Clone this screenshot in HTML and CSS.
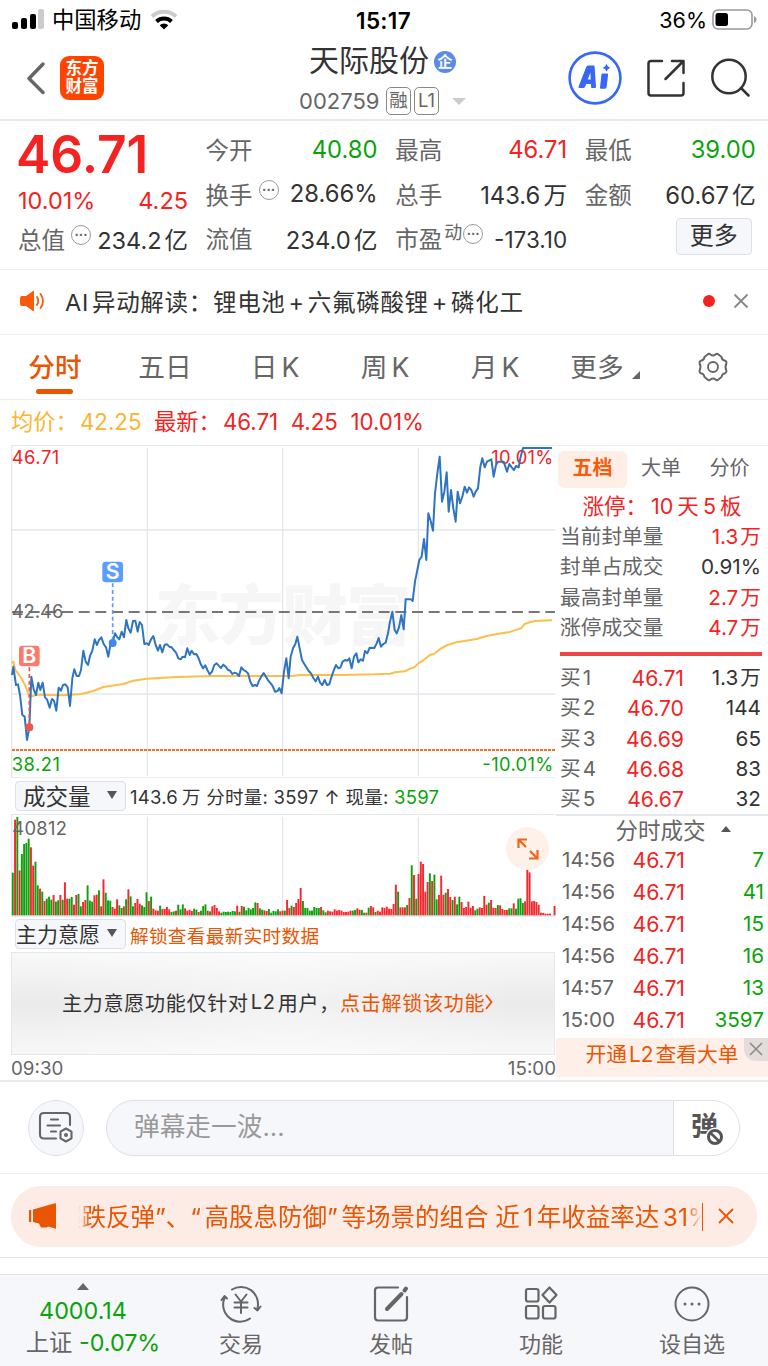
FILE: index.html
```
<!DOCTYPE html>
<html lang="zh-CN">
<head>
    <meta charset="UTF-8">
    <meta name="viewport" content="width=device-width, initial-scale=1.0">
    <title>天际股份 002759</title>
    <link rel="stylesheet" href="styles.css">
</head>
<body>
    <!-- Status bar -->
    <div class="status-bar">
        <div class="carrier">
            <svg width="33" height="22" viewBox="0 0 33 22">
                <rect x="0" y="13" width="6" height="7" rx="2"/>
                <rect x="9" y="9" width="6" height="11" rx="2"/>
                <rect x="18" y="5" width="6" height="15" rx="2"/>
                <rect x="26" y="0" width="6" height="20" rx="2" fill="#ccc"/>
            </svg>
            <span>中国移动</span>
            <svg class="wifi" width="28" height="22" viewBox="0 0 28 22" fill="none" stroke-width="4">
                <path d="M2 7.5A17.5 17.5 0 0 1 26 7.5" stroke="#ccc"/>
                <path d="M6.5 12.5A11 11 0 0 1 21.500 12.5" stroke="#000"/>
                <path d="M14 20.500L9.700 16.200A6.200 6.200 0 0 1 18.300 16.200Z" fill="#000"/>
            </svg>
        </div>
        <div class="clock">15:17</div>
        <div class="battery">
            <span>36%</span>
            <svg width="46" height="22" viewBox="0 0 46 22">
                <rect x="1" y="1" width="39" height="19" rx="5" fill="none" stroke="#999" stroke-width="1.600"/>
                <rect x="3.500" y="4" width="12.500" height="13" rx="2.500"/>
                <path d="M42 7q2.500 1 2.500 3.500T42 14z" fill="#999"/>
            </svg>
        </div>
    </div>

    <!-- Header -->
    <div class="header">
        <div class="header-left">
            <svg width="20" height="34" viewBox="0 0 20 34" fill="none" stroke="#666" stroke-width="3.500" stroke-linecap="round" stroke-linejoin="round"><path d="M17 3L3 17.500L17 31.500"/></svg>
            <div class="logo">东方<br>财富</div>
        </div>
        <div class="header-title">
            <div class="stock-name">天际股份<span class="badge-corp">企</span></div>
            <div class="stock-code"><span>002759</span><i>融</i><i>L1</i><b></b></div>
        </div>
        <div class="header-right">
            <svg width="54" height="54" viewBox="0 0 54 54">
                <circle cx="27" cy="27" r="25.400" fill="#fff" stroke="#3767f6" stroke-width="2.600"/>
                <path fill="#3767f6" fill-rule="evenodd" d="M20 14.500h5.500q1 0 1.100 1.200l1.400 20q0 1.300-1.300 1.300h-3.400l-.4-4h-4.700l-1.400 3.300q-.4.700-1.300.700h-4q-1.500 0-.9-1.500l7.600-19.500q.5-1.500 1.800-1.500zM19.800 28.500h2.900l-.3-7z"/>
                <path fill="#3767f6" d="M34.500 22.500h4.500q1.300 0 1.100 1.300l-1.500 12.500q-.1 1.400-1.500 1.400h-4q-1.300 0-1.100-1.300l1.400-12.500q.1-1.400 1.100-1.400zM38.500 12.500q.8 3.500 4 4.300q-3.200.8-4 4q-.8-3.200-4-4q3.200-.8 4-4.300z"/>
            </svg>
            <svg width="38" height="38" viewBox="0 0 38 38" fill="none" stroke="#333" stroke-width="2.500" stroke-linejoin="round" stroke-linecap="round">
                <path d="M15 2H4Q1.500 2 1.500 4.500V34Q1.500 36.500 4 36.500H34Q36.500 36.500 36.500 34V24M36.500 14V2H25M36 2.500L18.500 20"/>
            </svg>
            <svg width="40" height="40" viewBox="0 0 40 40" fill="none" stroke="#333" stroke-width="2.500" stroke-linecap="round"><circle cx="19" cy="18.500" r="16.700"/><path d="M31 30l7.500 7.500"/></svg>
        </div>
    </div>

    <!-- Quote -->
    <div class="quote">
        <div class="quote-main">
            <div class="price">46.71</div>
            <div class="row red"><span>10.01%</span><span>4.25</span></div>
            <div class="row"><label>总值<em class="more-dot">···</em></label><span>234.2<u>亿</u></span></div>
        </div>
        <div class="quote-col">
            <div class="row"><label>今开</label><span class="green">40.80</span></div>
            <div class="row"><label>换手<em class="more-dot">···</em></label><span>28.66%</span></div>
            <div class="row"><label>流值</label><span>234.0<u>亿</u></span></div>
        </div>
        <div class="quote-col">
            <div class="row"><label>最高</label><span class="red">46.71</span></div>
            <div class="row"><label>总手</label><span>143.6<u>万</u></span></div>
            <div class="row"><label>市盈<sup>动</sup><em class="more-dot tight">···</em></label><span class="pe">-173.10</span></div>
        </div>
        <div class="quote-col">
            <div class="row"><label>最低</label><span class="green">39.00</span></div>
            <div class="row"><label>金额</label><span>60.67<u>亿</u></span></div>
            <div class="row end"><button class="btn-more">更多</button></div>
        </div>
    </div>

    <!-- AI notice -->
    <div class="ai-bar">
        <svg width="26" height="22" viewBox="0 0 26 22" fill="#fa5a0a">
            <path d="M2 6h4l7-5q1-.5 1 .500v19q0 1-1 .500L6 16H2q-2 0-2-2V8q0-2 2-2z"/>
            <path d="M17 7q2.500 4 0 8M20.500 4q5 7 0 14" fill="none" stroke="#fa5a0a" stroke-width="1.800" stroke-linecap="round"/>
        </svg>
        <p>AI<u>异动解读：锂电池</u><u>+</u><u>六氟磷酸锂</u><u>+</u><u>磷化工</u></p>
        <span class="dot"></span>
        <svg width="16" height="16" viewBox="0 0 16 16" stroke="#888" stroke-width="1.800"><path d="M1.500 1.500l13 13M14.500 1.500l-13 13"/></svg>
    </div>

    <!-- Period tabs -->
    <div class="tabs">
        <span class="active">分时</span>
        <span>五日</span>
        <span>日<s>K</s></span>
        <span>周<s>K</s></span>
        <span>月<s>K</s></span>
        <span class="tab-more">更多</span>
        <svg class="gear" width="32" height="32" viewBox="0 0 32 32" fill="none" stroke="#666" stroke-width="1.900" stroke-linejoin="round">
            <path d="M10.500 3.500Q12 2 13.500 3.500Q16 5.500 18.500 3.500Q20 2 21.500 3.500L24.500 6Q25 9 27.500 9.500Q29.500 10 29.500 12Q27.500 16 29.500 20Q29.500 22 27.500 22.500Q25 23 24.500 26L21.500 28.500Q20 30 18.500 28.500Q16 26.500 13.500 28.500Q12 30 10.500 28.500L7.500 26Q7 23 4.500 22.500Q2.500 22 2.500 20Q4.500 16 2.500 12Q2.500 10 4.500 9.500Q7 9 7.500 6Z"/>
            <circle cx="16" cy="16" r="5"/>
        </svg>
    </div>

    <div class="legend">
        <span class="avg">均价：<q>42.25</q></span>
        <span>最新：<q>46.71</q></span><span>4.25</span><span>10.01%</span>
    </div>

    <!-- Chart + order book -->
    <div class="board">
        <div class="charts">
            <svg class="chart" width="556" height="333" viewBox="0 15 1668 999">
                <g stroke="#e4e7ee" stroke-width="4" fill="none">
                    <path d="M35 1014V16H1665M35 1014H1665M35 270H1665M35 762H1665M442 24V1008M848 24V1008M1255 24V1008"/>
                </g>
                <text class="watermark" x="465" y="598" textLength="770">东方财富</text>
                <path d="M36 516H1665" stroke="#777" stroke-width="6" stroke-dasharray="33 17"/>
                <path d="M36 930H1665" stroke="#f0702c" stroke-width="6" stroke-dasharray="9 3"/>
                <g class="lbl">
                    <text x="35" y="72" fill="#f52222" textLength="143">46.71</text>
                    <text x="35" y="534" fill="#666" textLength="155">42.46</text>
                    <text x="35" y="993" fill="#0ba30b" textLength="145">38.21</text>
                    <text x="1660" y="72" fill="#f52222" text-anchor="end" textLength="186">10.01%</text>
                    <text x="1660" y="993" fill="#0ba30b" text-anchor="end" textLength="213">-10.01%</text>
                </g>
                <polyline class="avg-line" points="36,670 40,665 46,690 60,708 75,735 88,768 100,768 110,764 190,766 245,762 280,753 310,741 370,732 400,722 440,716 530,711 640,708 875,708 900,705 1025,705 1125,703 1170,701 1185,697 1215,694 1230,686 1243,682 1255,670 1270,661 1290,645 1305,640 1320,627 1345,614 1370,607 1430,597 1460,588 1490,582 1525,577 1563,565 1575,551 1603,543 1656,541"/>
                <polyline class="price-line" points="36,705 40,680 48,735 54,733 60,765 67,825 74,830 81,900 88,862 94,710 101,748 108,765 115,728 121,750 128,728 135,772 141,778 149,803 156,777 162,782 169,812 176,743 183,752 189,735 196,733 203,742 210,798 217,715 223,688 230,708 237,708 243,690 250,632 257,665 264,675 270,648 277,632 284,598 291,615 297,600 304,592 311,612 318,622 325,650 331,615 338,608 345,580 352,592 358,598 365,575 372,592 379,540 385,565 392,578 399,543 406,542 413,575 419,546 426,555 433,612 440,610 446,615 453,598 460,588 467,615 474,632 480,615 487,637 494,614 501,613 508,620 515,622 521,630 528,638 535,655 542,658 548,650 555,652 562,625 569,645 575,632 582,643 589,642 596,655 602,672 609,685 616,676 622,690 629,703 636,695 643,675 650,670 656,677 663,684 670,674 677,680 684,690 690,692 697,702 704,698 710,700 717,708 724,682 731,690 738,694 744,700 751,725 758,738 765,735 771,738 778,720 785,708 791,699 798,710 805,722 812,730 818,738 825,755 833,753 838,744 845,760 852,695 859,655 866,715 872,650 879,625 886,612 892,590 899,625 906,660 913,672 920,683 926,693 933,700 940,714 947,724 954,710 960,728 967,735 974,720 981,735 988,733 994,712 1001,692 1008,675 1015,685 1021,683 1028,665 1035,660 1042,662 1048,655 1055,685 1062,650 1069,640 1075,667 1082,658 1089,662 1095,633 1102,640 1109,623 1123,624 1130,610 1136,594 1143,620 1150,612 1157,608 1164,580 1170,545 1177,515 1184,570 1190,580 1197,562 1204,525 1211,568 1217,478 1233,478 1238,483 1245,425 1252,390 1258,360 1265,350 1272,297 1279,360 1285,220 1292,243 1299,272 1305,160 1312,100 1319,50 1326,185 1333,155 1340,97 1346,215 1353,150 1360,205 1367,245 1373,155 1380,190 1387,170 1394,140 1401,158 1407,142 1414,150 1421,170 1427,155 1434,145 1441,80 1447,55 1454,82 1461,65 1474,58 1481,110 1488,75 1494,65 1511,65 1521,95 1528,72 1535,82 1542,90 1548,78 1556,82 1562,50 1569,24 1656,24"/>
                <!-- Sell / buy marks -->
                <path d="M338 430V608" stroke="#5b9dff" stroke-width="5" stroke-dasharray="12 8"/>
                <circle cx="338" cy="609" r="12" fill="#3f86f0"/>
                <rect x="307" y="365" width="62" height="62" rx="10" fill="#5b9dff"/>
                <text class="mark" x="338" y="418">S</text>
                <path d="M88 682V860" stroke="#e8564c" stroke-width="5" stroke-dasharray="12 8"/>
                <circle cx="88" cy="862" r="12" fill="#e8564c"/>
                <rect x="57" y="617" width="62" height="62" rx="10" fill="#fa7a6c"/>
                <text class="mark" x="88" y="670">B</text>
            </svg>

            <div class="ind-row">
                <div class="select">成交量<b></b></div>
                <p>143.6<u>万</u> 分时量: 3597 ↑ 现量: <span class="green">3597</span></p>
            </div>

            <div class="volume">
                <svg width="556" height="103" viewBox="0 102 1668 309">
                    <path d="M35 408V103H1665M35 408H1665M442 110V408M848 110V408M1255 110V408" stroke="#e4e7ee" stroke-width="4" fill="none"/>
                    <g id="bars"></g>
                    <text class="vol-lbl" x="37" y="164" textLength="164">40812</text>
                </svg>
                <div class="expand">
                    <svg width="22" height="22" viewBox="0 0 22 22" fill="none" stroke="#f0651a" stroke-width="2.200"><path d="M1.500 10V1.500H10M1.500 1.500L9 9M20.500 12V20.500H12M20.500 20.500L13 13"/></svg>
                </div>
            </div>

            <div class="ind-row">
                <div class="select force">主力意愿<b></b></div>
                <p class="unlock">解锁查看最新实时数据</p>
            </div>

            <div class="locked">主力意愿功能仅针对<u>L2</u><u>用户，</u><a>点击解锁该功能<svg width="8" height="16" viewBox="0 0 8 16" fill="none" stroke="#ea5504" stroke-width="1.800"><path d="M1 1l5.500 7L1 15"/></svg></a></div>
            <div class="axis"><span>09:30</span><span>15:00</span></div>
        </div>

        <div class="book">
            <div class="book-tabs"><span class="active">五档</span><span>大单</span><span>分价</span></div>
            <div class="limit-up">涨停：<u>10</u><u>天</u><u>5</u><u>板</u></div>
            <div class="brow"><span>当前封单量</span><span class="red">1.3<u>万</u></span></div>
            <div class="brow"><span>封单占成交</span><span class="dark">0.91%</span></div>
            <div class="brow"><span>最高封单量</span><span class="red">2.7<u>万</u></span></div>
            <div class="brow"><span>涨停成交量</span><span class="red">4.7<u>万</u></span></div>
            <div class="ratio"></div>
            <div class="levels">
                <div class="brow"><span>买<u>1</u></span><span class="red mid">46.71</span><span class="dark">1.3<u>万</u></span></div>
                <div class="brow"><span>买<u>2</u></span><span class="red mid">46.70</span><span class="dark">144</span></div>
                <div class="brow"><span>买<u>3</u></span><span class="red mid">46.69</span><span class="dark">65</span></div>
                <div class="brow"><span>买<u>4</u></span><span class="red mid">46.68</span><span class="dark">83</span></div>
                <div class="brow"><span>买<u>5</u></span><span class="red mid">46.67</span><span class="dark">32</span></div>
            </div>
            <div class="ticks">
                <div class="ticks-title">分时成交<b></b></div>
                <div class="brow"><span>14:56</span><span class="red mid">46.71</span><span class="green">7</span></div>
                <div class="brow"><span>14:56</span><span class="red mid">46.71</span><span class="green">41</span></div>
                <div class="brow"><span>14:56</span><span class="red mid">46.71</span><span class="green">15</span></div>
                <div class="brow"><span>14:56</span><span class="red mid">46.71</span><span class="green">16</span></div>
                <div class="brow"><span>14:57</span><span class="red mid">46.71</span><span class="green">13</span></div>
                <div class="brow"><span>15:00</span><span class="red mid">46.71</span><span class="green">3597</span></div>
            </div>
            <div class="l2">开通<u>L2</u><u>查看大单</u>
                <div class="l2-close"><svg width="14" height="14" viewBox="0 0 14 14" stroke="#888" stroke-width="1.500"><path d="M1 1l12 12M13 1L1 13"/></svg></div>
            </div>
        </div>
    </div>

    <!-- Danmaku input -->
    <div class="danmaku">
        <div class="round">
            <svg width="36" height="34" viewBox="0 0 36 34" fill="none" stroke="#666" stroke-width="2.100" stroke-linecap="round">
                <path d="M18 27.500H6Q2 27.500 2 23.500V6Q2 2 6 2H28Q32 2 32 6V14M13 8.500H20M9.500 14.500H22M13 20.500H18"/>
                <path d="M28 17.500l5.500 3.200v6.600L28 30.500l-5.500-3.200v-6.600z" stroke-linejoin="round"/><circle cx="28" cy="24" r="1" fill="#666"/>
            </svg>
        </div>
        <div class="input">
            <span>弹幕走一波...</span>
            <div class="dan">弹<svg width="20" height="20" viewBox="0 0 20 20"><circle cx="10" cy="10" r="9.500" fill="#fff"/><circle cx="10" cy="10" r="6.500" fill="none" stroke="#555" stroke-width="3"/><path d="M5.500 6l9 8.500" stroke="#555" stroke-width="2.500"/></svg></div>
        </div>
    </div>

    <!-- Promo banner -->
    <div class="promo-wrap">
        <div class="promo">
            <svg width="30" height="26" viewBox="0 0 30 26" fill="#ea5504"><path d="M1 7h2.200v12H1zM5 6.500L26 .500q2-.500 2 0v25q0 .500-2-.200L20 23.500l-1 1h-6l-2-4-6-1.500z"/></svg>
            <div class="marquee"><p>超跌反弹”、“<u>高股息防御”</u><u>等场景的组合 近</u><u>1</u><u>年收益率达</u><u>31%</u></p></div>
            <i></i>
            <svg width="16" height="16" viewBox="0 0 16 16" stroke="#ea5504" stroke-width="1.800"><path d="M1 1l14 14M15 1L1 15"/></svg>
        </div>
    </div>

    <!-- Bottom nav -->
    <div class="nav">
        <div class="index">
            <b></b>
            <div class="green">4000.14</div>
            <div class="idx-name">上证 <span class="green">-0.07%</span></div>
        </div>
        <div class="nav-item">
            <svg width="42" height="38" viewBox="0 0 42 38" fill="none" stroke="#666" stroke-width="2" stroke-linecap="round" stroke-linejoin="round">
                <path d="M12 4.500A17 17 0 0 1 37.500 23M40.500 21.500l-3 4-3-2.500M30 33.500A17 17 0 0 1 4.500 13M1.500 15l3-4 2.500 2.500"/>
                <path d="M15.500 9.500l5.500 7 5.500-7M14.500 17.500h13M14.500 22.500h13M21 17v11"/>
            </svg>
            <span>交易</span>
        </div>
        <div class="nav-item">
            <svg width="38" height="38" viewBox="0 0 38 38" fill="none" stroke="#666" stroke-width="2.200" stroke-linecap="round">
                <path d="M26 2.500H6Q3 2.500 3 5.500V32Q3 35.500 6 35.500H32Q35 35.500 35 32V12"/>
                <path d="M15 24L29.500 9M32.500 5.500l1.500-2" stroke-width="4"/>
            </svg>
            <span>发帖</span>
        </div>
        <div class="nav-item">
            <svg width="38" height="38" viewBox="0 0 38 38" fill="none" stroke="#666" stroke-width="2.200" stroke-linejoin="round">
                <rect x="4" y="4" width="12.500" height="12.500" rx="2"/><rect x="4" y="21" width="12.500" height="12.500" rx="2"/><rect x="21" y="21" width="12.500" height="12.500" rx="2"/>
                <path d="M27.500 2.500l7 7.500-7 7.500-7-7.500z"/>
            </svg>
            <span>功能</span>
        </div>
        <div class="nav-item">
            <svg width="38" height="38" viewBox="0 0 38 38" fill="none" stroke="#666" stroke-width="2"><circle cx="19" cy="19" r="16.500"/><path d="M12 19h.01M19 19h.01M26 19h.01" stroke-width="3" stroke-linecap="round"/></svg>
            <span>设自选</span>
        </div>
    </div>

    <script src="script.js"></script>
</body>
</html>
```
FILE: styles.css
```
* {
    box-sizing: border-box;
    margin: 0;
    padding: 0;
}

body {
    width: 768px;
    height: 1366px;
    overflow: hidden;
    background: #fff;
    color: #333;
    font-family: Inter, "Noto Sans CJK SC", sans-serif;
    font-size: 22px;
    white-space: nowrap;
}

svg {
    display: block;
    flex: none;
}

i, em {
    font-style: normal;
}

u, s {
    text-decoration: none;
}

q {
    margin-left: 2px;
    quotes: none;
}

.red {
    color: #f52222;
}

.green {
    color: #0ba30b !important;
}

.dark {
    color: #333;
}

/* Status bar */
.status-bar {
    display: grid;
    grid-template-columns: 1fr 100px 1fr;
    align-items: center;
    height: 40px;
    padding: 0 10px 0 12px;
    color: #000;
}

.carrier, .battery {
    display: flex;
    align-items: center;
}

.carrier span {
    margin-left: 7px;
    font-size: 22.300px;
    line-height: 30px;
}

.wifi {
    margin-left: 9px;
}

.clock {
    margin-left: -3px;
    text-align: center;
    font-weight: 600;
    font-size: 22.500px;
    letter-spacing: .3px;
}

.battery {
    justify-content: flex-end;
    gap: 5px;
    font-size: 21.500px;
}

/* Header */
.header {
    display: grid;
    grid-template-columns: 1fr 170px 1fr;
    height: 81px;
    border-bottom: 2px solid #eaeaea;
}

.header-left {
    display: flex;
    align-items: center;
    gap: 14px;
    padding: 0 0 3px 26px;
}

.logo {
    width: 44px;
    height: 44px;
    padding-top: 4px;
    border-radius: 9px;
    background: #ff4400;
    color: #fff;
    font-weight: 700;
    font-size: 16.500px;
    line-height: 17.500px;
    text-align: center;
}

.header-title {
    display: flex;
    flex-direction: column;
}

.stock-name {
    display: flex;
    align-items: center;
    gap: 5px;
    height: 45px;
    padding: 0 0 5px 10px;
    font-size: 30px;
    line-height: 40px;
}

.badge-corp {
    width: 22px;
    height: 22px;
    margin-top: 3px;
    border-radius: 50%;
    background: #5b8ae8;
    color: #fff;
    font-weight: 700;
    font-size: 15px;
    line-height: 21px;
    text-align: center;
}

.stock-code {
    display: flex;
    align-items: center;
    height: 32px;
    color: #666;
    font-size: 22px;
}

.stock-code span {
    width: 87px;
}

.stock-code i {
    width: 25px;
    height: 28px;
    margin-right: 3px;
    border: 1.500px solid #888;
    border-radius: 5px;
    font-size: 18.500px;
    line-height: 25px;
    text-align: center;
}

.stock-code b {
    flex: none;
    margin-left: 10px;
    border: 7px solid transparent;
    border-top-color: #ccc;
    border-bottom: 0;
}

.header-right {
    display: flex;
    align-items: center;
    justify-content: flex-end;
    gap: 25px;
    padding: 0 18px 4px 0;
}

/* Quote */
.quote {
    display: grid;
    grid-template-columns: 170px 172px 172px 171px;
    column-gap: 17.600px;
    height: 149px;
    padding: 6px 0 0 18px;
    border-bottom: 1px solid #eee;
    font-size: 23.800px;
}

.quote .row {
    display: flex;
    justify-content: space-between;
    align-items: center;
    height: 44.500px;
}

.quote .end {
    justify-content: flex-end;
}

.quote label {
    display: flex;
    align-items: center;
    color: #666;
    font-size: 23.500px;
}

.quote u {
    margin-left: 3px;
}

.quote-main .price {
    height: 52px;
    margin-left: -2px;
    color: #f52222;
    font-weight: 600;
    font-size: 51.500px;
    line-height: 54px;
}

.quote-main .row {
    height: 34px;
    font-size: 23.500px;
}

.quote-main .red {
    height: 43px;
}

.more-dot {
    width: 20px;
    height: 20px;
    margin: -8px 0 0 6px;
    border: 1.700px solid #999;
    border-radius: 50%;
    font-weight: 700;
    font-size: 13px;
    line-height: 16px;
    text-align: center;
}

.more-dot.tight {
    margin-left: 1px;
}

.quote sup {
    margin: -14px 0 0 2px;
    font-size: 18px;
}

.pe {
    padding-top: 2px;
    font-size: 22.500px;
}

.btn-more {
    width: 76px;
    height: 37px;
    margin: -4px 4px 0 0;
    border: 1px solid #dde0e8;
    border-radius: 4px;
    background: #f6f7fa;
    color: #333;
    font-family: inherit;
    font-size: 24px;
    line-height: 34px;
}

/* AI notice */
.ai-bar {
    display: flex;
    align-items: center;
    height: 65px;
    padding: 0 19px 2px 20px;
    border-bottom: 1px solid #eee;
}

.ai-bar p {
    flex: 1;
    margin-left: 19px;
    font-size: 23.500px;
    letter-spacing: .7px;
}

.ai-bar u {
    margin-left: 3px;
}

.ai-bar .dot {
    width: 12px;
    height: 12px;
    margin-right: 18px;
    border-radius: 50%;
    background: #f52222;
}

/* Period tabs */
.tabs {
    display: grid;
    grid-template-columns: 110px 110px 110px 110px 110px 96px 1fr;
    align-items: center;
    justify-items: center;
    height: 65px;
    border-bottom: 1px solid #eee;
    color: #666;
    font-size: 26.700px;
    line-height: 62px;
}

.tabs s {
    margin-left: 4px;
}

.tabs .active {
    position: relative;
    color: #ea5504;
    font-weight: 500;
}

.tabs .active::after {
    content: "";
    position: absolute;
    left: 8px;
    bottom: 4px;
    width: 37px;
    height: 5px;
    border-radius: 3px;
    background: #ea5504;
}

.tab-more {
    display: flex;
    align-items: flex-end;
    gap: 8px;
    padding-left: 14px;
}

.tab-more::after {
    content: "";
    margin-bottom: 19px;
    border-left: 8px solid transparent;
    border-bottom: 8px solid #666;
}

.gear {
    margin-left: 12px;
}

.legend {
    display: flex;
    gap: 12.500px;
    height: 45px;
    padding-left: 11px;
    color: #f52222;
    font-size: 22.300px;
    line-height: 44px;
}

.legend .avg {
    color: #fcb530;
}

/* Charts */
.board {
    display: grid;
    grid-template-columns: 556px 212px;
    height: 637px;
    border-bottom: 2px solid #eaeaea;
}

.chart text {
    font-family: Inter, "Noto Sans CJK SC", sans-serif;
}

.lbl text, .vol-lbl {
    font-size: 55px;
}

.vol-lbl {
    fill: #666;
}

.chart .watermark {
    fill: #f6f6f7;
    font-weight: 900;
    font-size: 196px;
}

.chart .mark {
    fill: #fff;
    font-weight: 600;
    font-size: 64px;
    text-anchor: middle;
}

.avg-line, .price-line {
    fill: none;
    stroke: #fdbe4c;
    stroke-width: 6;
    stroke-linejoin: round;
}

.price-line {
    stroke: #2f74c0;
}

.ind-row {
    display: flex;
    align-items: center;
    gap: 4px;
    height: 36px;
    padding-left: 15px;
    font-size: 18.500px;
    letter-spacing: .25px;
}

.ind-row u {
    margin-left: 4px;
}

.select {
    display: flex;
    align-items: center;
    justify-content: space-between;
    width: 111px;
    height: 30px;
    padding: 0 8px 2px 7px;
    border: 1px solid #dcdfe8;
    border-radius: 4px;
    background: #f6f7fa;
    font-size: 22.500px;
    letter-spacing: 0;
}

.select.force {
    padding-left: 0;
    font-size: 21px;
}

.select b {
    border: 5px solid transparent;
    border-top: 8px solid #555;
    border-bottom: 0;
}

.unlock {
    color: #ea5504;
    font-size: 18.700px;
}

.volume {
    position: relative;
    height: 102px;
}

.expand {
    position: absolute;
    left: 506px;
    top: 13px;
    display: flex;
    align-items: center;
    justify-content: center;
    width: 43px;
    height: 43px;
    border-radius: 50%;
    background: rgba(254, 240, 233, .95);
}

.locked {
    display: flex;
    align-items: center;
    height: 103px;
    margin: 0 1px 0 11px;
    padding: 0 0 3px 50px;
    border: 1px solid #e4e7ee;
    background: linear-gradient(90deg, rgba(255,255,255,0) 5%, rgba(255,255,255,.35) 50%, rgba(255,255,255,0) 95%), linear-gradient(#f9f9f9, #eaeaea 50%, #f8f8f8);
    font-size: 20px;
    letter-spacing: .75px;
}

.locked u {
    margin-left: 2px;
}

.locked a {
    display: flex;
    align-items: center;
    color: #ea5504;
}

.axis {
    display: flex;
    justify-content: space-between;
    padding-left: 11px;
    color: #666;
    font-size: 18.800px;
    line-height: 28px;
}

/* Order book */
.book {
    height: 635px;
    padding-top: 5px;
    border-top: 1px solid #eaecf1;
    color: #666;
    font-size: 20.700px;
}

.book-tabs {
    display: grid;
    grid-template-columns: 69px 68px 69px;
    height: 37px;
    margin-left: 2px;
    font-size: 20px;
    line-height: 34px;
    text-align: center;
}

.book-tabs .active {
    border-radius: 6px;
    background: #ffeee6;
    color: #fa5a0a;
    font-weight: 700;
}

.limit-up {
    height: 35px;
    color: #f52222;
    font-size: 21.500px;
    line-height: 37px;
    text-align: center;
}

.limit-up u {
    margin-left: 4px;
}

.brow {
    display: flex;
    justify-content: space-between;
    height: 30.250px;
    padding: 0 7px 0 4px;
    line-height: 28px;
}

.brow u {
    margin-left: 2px;
}

.ratio {
    height: 4px;
    margin: 8px 6px 8px 4px;
    background: #ef4548;
}

.levels .brow, .ticks .brow {
    display: grid;
    grid-template-columns: 54px 70px 1fr;
    text-align: right;
}

.levels .brow span:first-child, .ticks .brow span:first-child {
    text-align: left;
}

.mid {
    font-size: 21.200px;
}

.levels {
    height: 150px;
}

.ticks {
    border-top: 2px solid #e4e7ee;
}

.ticks-title {
    display: flex;
    align-items: center;
    justify-content: center;
    gap: 15px;
    height: 30px;
    padding: 0 0 4px 22px;
    font-size: 22.500px;
}

.ticks-title b {
    border: 5px solid transparent;
    border-bottom: 6px solid #555;
    border-top: 0;
}

.ticks .brow {
    grid-template-columns: 54px 69px 1fr;
    height: 32.100px;
    padding: 0 4px 0 6px;
}

.l2 {
    position: relative;
    height: 39px;
    margin-top: -1px;
    background: #fef0e9;
    color: #ea5504;
    font-size: 20.800px;
    line-height: 34px;
    text-align: center;
}

.l2 u {
    margin-left: 2px;
}

.l2-close {
    position: absolute;
    right: 0;
    top: 0;
    display: flex;
    align-items: center;
    justify-content: center;
    width: 24px;
    height: 23px;
    border-bottom-left-radius: 12px;
    background: #e3dcd9;
}

/* Danmaku */
.danmaku {
    display: flex;
    align-items: center;
    gap: 22px;
    height: 92px;
    padding: 0 28px;
    border-bottom: 1px solid #eee;
}

.round {
    display: flex;
    align-items: center;
    justify-content: center;
    width: 56px;
    height: 56px;
    border: 1px solid #dde0e6;
    border-radius: 50%;
    background: #f6f7fa;
}

.input {
    display: flex;
    flex: 1;
    height: 56px;
    border: 1px solid #dde0e6;
    border-radius: 28px;
    background: #f6f7fa;
    overflow: hidden;
}

.input span {
    flex: 1;
    padding-left: 27px;
    color: #999;
    font-size: 25.700px;
    line-height: 51px;
}

.dan {
    position: relative;
    width: 66px;
    padding-left: 17px;
    border-left: 1px solid #dde0e6;
    background: #fff;
    color: #555;
    font-weight: 700;
    font-size: 27px;
    line-height: 52px;
}

.dan svg {
    position: absolute;
    left: 31px;
    top: 26px;
}

/* Promo */
.promo-wrap {
    height: 84px;
    padding: 12px 11px 0;
    border-bottom: 1px solid #e4e7ee;
}

.promo {
    display: flex;
    align-items: center;
    height: 61px;
    padding: 0 23px 0 17px;
    border-radius: 30px;
    background: #fdece5;
    color: #ea5504;
    font-size: 24.500px;
}

.promo > svg {
    margin-top: -1px;
}

.marquee {
    width: 624px;
    margin-left: 20px;
    overflow: hidden;
    -webkit-mask-image: linear-gradient(90deg, transparent, #000 12px, #000 608px, transparent);
    mask-image: linear-gradient(90deg, transparent, #000 12px, #000 608px, transparent);
}

.marquee p {
    margin: -2px 0 0 -21px;
}

.marquee u {
    margin-left: 3.500px;
}

.promo i {
    width: 1.500px;
    height: 28px;
    margin-right: 15px;
    background: #ea5504;
}

/* Bottom nav */
.nav {
    display: grid;
    grid-template-columns: 166px 150px 150px 150px 152px;
    height: 93px;
    margin-top: 16px;
    border-top: 1px solid #dfe1e6;
    background: #f6f7fa;
    color: #666;
    font-size: 22px;
}

.index {
    display: flex;
    flex-direction: column;
    align-items: center;
    padding: 8px 0 0 20px;
    font-size: 23.300px;
    line-height: 32px;
}

.index b {
    margin-bottom: 5px;
    border: 6px solid transparent;
    border-bottom: 7px solid #666;
    border-top: 0;
}

.index b, .index div:first-of-type {
    position: relative;
    left: -10px;
}

.nav-item {
    display: flex;
    flex-direction: column;
    align-items: center;
    padding-top: 10px;
}

.nav-item span {
    margin-top: 5px;
    line-height: 32px;
}
```
FILE: script.js
```
// one entry per minute: g = down, r = up, number = bar height
const volume = `g128 r287 g295 r135 g184 g214 g217 g230 r204 r149 g161 g90 r80 g71 r43 g50 g56 g47 r61 g41
g45 r61 g47 r99 r50 g50 g55 r32 r61 g64 g27 r40 r46 g90 g44 g41 r60 r62 g75 r27
r108 g68 g45 g44 r25 r20 r48 g30 g22 r27 g48 r78 g57 g27 r37 r49 r35 g30 g25 g69
r43 g56 r20 r15 r14 g29 r19 r19 r25 r18 g10 g12 r14 g32 g18 g33 r21 r14 r17 r13
g20 g17 r10 g14 g28 g33 r14 g12 r27 r31 r22 r12 g8 g11 g10 g11 g10 g13 g12 r29
g11 r28 g26 g15 g22 g18 g22 g39 r37 g21 g17 r15 r13 g19 g8 g13 g12 g18 r12 r14
g14 r46 r22 g29 r25 r37 r49 r82 g43 g22 g22 g14 g14 g25 g22 g22 r25 g15 g9 r14
r12 r11 r18 r14 r16 r14 r10 r10 r11 r14 g14 g16 r21 r17 g16 g8 r8 g23 r28 r24
g10 r14 r11 r24 r22 r26 r20 r19 r34 r92 g71 r24 r24 r24 g31 r52 g150 r121 g50 r124
r161 r154 r71 r100 g126 r103 g122 g48 r61 r119 r62 g68 r79 r55 g46 r56 g33 g56 r40 r22
r25 r41 r23 r28 g15 g20 r24 r22 r58 r32 g38 r46 r23 r22 g31 r30 r19 r16 r16 g21
g21 r36 g20 g50 g51 g37 r42 r139 r129 r42 r43 r40 r32 r8 r7 r5 r5 r5 r0 r28`.split(/\s+/)

const bars = document.getElementById("bars")

bars.innerHTML = volume.map((item, i) => {
    const color = item[0] === "g" ? "#0ea00e" : "#f5282e"
    const h = Number(item.slice(1))
    const x = (35.5 + i * 6.8).toFixed(2)
    return `<rect x="${x}" y="${406 - h}" width="5.8" height="${h}" fill="${color}"/>`
}).join("")
```
